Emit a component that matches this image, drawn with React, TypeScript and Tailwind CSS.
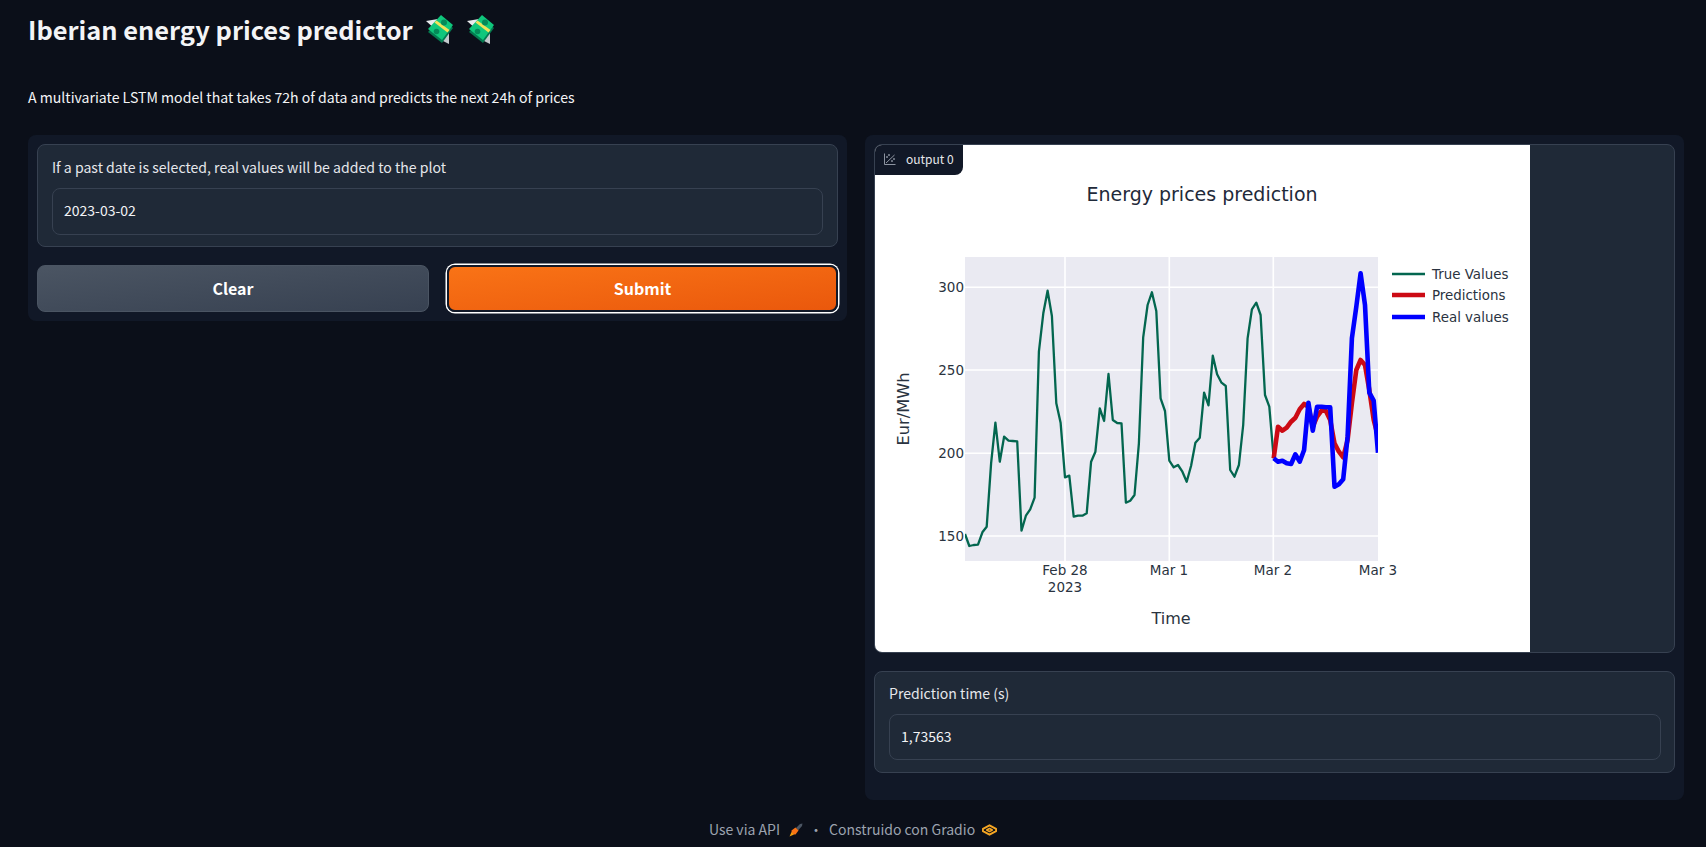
const green: number[] = [852,888,885,884,847,830,640,518,635,560,572,573,574,842,797,778,743,305,190,122,198,460,518,682,677,800,797,797,790,635,605,475,513,372,510,519,520,758,752,735,580,262,165,127,183,445,483,632,652,645,665,695,647,578,563,428,466,317,373,398,408,660,680,645,525,265,178,158,195,435,470,625];
const red: number[] = [625,530,542,533,515,503,478,462,470,530,500,482,482,510,580,605,622,570,460,360,330,345,420,510,560];
const blue: number[] = [625,635,632,640,642,613,635,600,458,542,470,470,472,472,710,703,688,560,265,170,70,165,428,452,608];

const X0 = 965;
const DX = (1378 - 965) / 95;
const line = (ys: number[], start: number) =>
  ys.map((y, i) => `${(X0 + (start + i) * DX).toFixed(1)},${(250 + y / 3).toFixed(1)}`).join(" ");

const FONT = "'DejaVu Sans', sans-serif";
const INK = "#2a3340";

function Chart() {
  return (
    <svg viewBox="875 145 655 507" className="block w-[655px] h-[507px]" style={{ fontFamily: FONT }}>
      <defs>
        <clipPath id="plotclip">
          <rect x="965" y="257" width="413" height="304" />
        </clipPath>
      </defs>
      <text x="1202" y="201" textAnchor="middle" fontSize="19" fill="#1f2a3a">Energy prices prediction</text>
      <rect x="965" y="257" width="413" height="304" fill="#eaeaf2" />
      {[287.3, 370, 453.3, 536].map((y) => (
        <line key={y} x1="965" x2="1378" y1={y} y2={y} stroke="#fff" strokeWidth="1.6" />
      ))}
      {[1065, 1169.3, 1273.3].map((x) => (
        <line key={x} x1={x} x2={x} y1="257" y2="561" stroke="#fff" strokeWidth="1.6" />
      ))}
      <g clipPath="url(#plotclip)">
        <polyline points={line(green, 0)} fill="none" stroke="#03664f" strokeWidth="2.3" strokeLinejoin="round" />
        <polyline points={line(red, 71)} fill="none" stroke="#cc0a14" strokeWidth="4.6" strokeLinejoin="round" />
        <polyline points={line(blue, 71)} fill="none" stroke="#0000ff" strokeWidth="4.6" strokeLinejoin="round" />
      </g>
      {[[300, 292], [250, 375], [200, 458], [150, 541]].map(([v, y]) => (
        <text key={v} x="964" y={y} textAnchor="end" fontSize="13.5" fill={INK}>{v}</text>
      ))}
      {[["Feb 28", 1065], ["Mar 1", 1169], ["Mar 2", 1273], ["Mar 3", 1378]].map(([t, x]) => (
        <text key={t} x={x} y="575" textAnchor="middle" fontSize="13.5" fill={INK}>{t}</text>
      ))}
      <text x="1065" y="592" textAnchor="middle" fontSize="13.5" fill={INK}>2023</text>
      <text x="1171" y="624" textAnchor="middle" fontSize="16" fill={INK}>Time</text>
      <text transform="translate(909 409) rotate(-90)" textAnchor="middle" fontSize="16.2" fill={INK}>Eur/MWh</text>
      <line x1="1392" x2="1425" y1="274" y2="274" stroke="#03664f" strokeWidth="2.3" />
      <line x1="1392" x2="1425" y1="295" y2="295" stroke="#cc0a14" strokeWidth="4.6" />
      <line x1="1392" x2="1425" y1="317" y2="317" stroke="#0000ff" strokeWidth="4.6" />
      <text x="1432" y="279" fontSize="13.4" fill={INK}>True Values</text>
      <text x="1432" y="300" fontSize="13.4" fill={INK}>Predictions</text>
      <text x="1432" y="322" fontSize="13.4" fill={INK}>Real values</text>
    </svg>
  );
}

function MoneyEmoji() {
  return (
    <svg viewBox="0 0 28 29" className="mt-[1px] h-[29px] w-[28px] shrink-0">
      <polygon points="0,6 12,4 9,14" fill="#e8eaed" />
      <polygon points="17,18 23,16 23,29 15,25" fill="#c3c9cd" />
      <polygon points="2,17 15,3 27,13 16,28" fill="#047a50" />
      <polygon points="2,14 15,0 27,10 16,25" fill="#0fc77c" />
      <polygon points="8.5,7.5 10.5,5.5 23.5,15 21.5,17.5" fill="#f0e25a" />
      <circle cx="18" cy="7.5" r="3" fill="#058a59" />
      <circle cx="10.5" cy="16.5" r="2.8" fill="#058a59" />
    </svg>
  );
}

function PlotIcon() {
  return (
    <svg viewBox="0 0 12 12" className="h-[12px] w-[12px]" fill="none" stroke="#9ca3af" strokeWidth="0.9">
      <path d="M0.5 0.5V11.5H11.5" />
      <path d="M2 10L10.5 2" />
      <circle cx="3" cy="4" r="0.5" fill="#9ca3af" />
      <circle cx="5" cy="2" r="0.5" fill="#9ca3af" />
      <circle cx="8" cy="8" r="0.5" fill="#9ca3af" />
      <circle cx="10" cy="6" r="0.5" fill="#9ca3af" />
    </svg>
  );
}

function Rocket() {
  return (
    <svg viewBox="0 0 14 14" className="h-[14px] w-[14px] shrink-0">
      <path d="M7 5L11 1L13.5 0.5L13 3L9 7.5Z" fill="#4b5563" />
      <path d="M2.5 7.5L6.5 4.5L9.5 7.5L6.5 11.5C4.5 12 2 10.5 2.5 7.5Z" fill="#f97316" />
      <path d="M2.5 9L0.5 13.5L5 11.5Z" fill="#f59e0b" />
    </svg>
  );
}

function GradioLogo() {
  return (
    <svg viewBox="0 0 16 12" className="h-[12px] w-[15px] shrink-0" fill="none" stroke="#f5a623" strokeWidth="2" strokeLinejoin="round">
      <path d="M8 1L15 4.8V7.2L8 11L1 7.2V4.8Z" />
      <path d="M5 6L8 4.4L11 6L8 7.6Z" strokeWidth="1.6" />
    </svg>
  );
}

export default function App() {
  return (
    <div className="min-h-[847px] bg-[#0b0f19] text-white" style={{ fontFamily: "'Noto Sans CJK SC', sans-serif" }}>
      <div className="pl-[28px] pr-[22px]">
        <div className="h-[88px] pt-[11px]">
          <h1 className="flex items-center text-[25.4px] leading-[36px] font-semibold text-[#f3f4f6]">
            <span>Iberian energy prices predictor</span>
            <span className="ml-[13px] flex gap-[13px]">
              <MoneyEmoji />
              <MoneyEmoji />
            </span>
          </h1>
        </div>
        <p className="h-[47px] text-[14.1px] leading-[18px] text-[#f3f4f6]">
          A multivariate LSTM model that takes 72h of data and predicts the next 24h of prices
        </p>

        <div className="flex items-start gap-[18px]">
          <div className="w-[819px] rounded-lg bg-[#111827] p-[9px]">
            <div className="rounded-lg border border-[#374151] bg-[#1f2937] px-[14px] pt-[13px] pb-[11px]">
              <div className="h-[20px] text-[14.08px] leading-[18px] text-[#e5e7eb]">
                If a past date is selected, real values will be added to the plot
              </div>
              <div className="mt-[10px] flex h-[47px] items-center rounded-lg border border-[#374151] bg-[#1f2937] pb-[2px] pl-[11px] text-[14px] text-[#f3f4f6]">
                2023-03-02
              </div>
            </div>
            <div className="mt-[18px] flex gap-[18px]">
              <button className="h-[47px] w-[392px] rounded-lg border border-[#4b5563] bg-gradient-to-br from-[#4b5563] to-[#374151] pb-[2px] text-[16px] font-semibold text-white">
                Clear
              </button>
              <button className="h-[47px] w-[391px] rounded-lg border-2 border-[#111827] bg-gradient-to-br from-[#f97316] to-[#ea580c] pb-[1px] text-[16px] font-semibold text-white ring-[1.5px] ring-white">
                Submit
              </button>
            </div>
          </div>

          <div className="w-[819px] rounded-lg bg-[#111827] px-[9px] pt-[9px] pb-[27px]">
            <div className="relative h-[509px] overflow-hidden rounded-lg border border-[#374151] bg-[#1f2937]">
              <div className="w-[655px] bg-white">
                <Chart />
              </div>
              <div className="absolute left-0 top-0 flex h-[30px] w-[88px] items-center gap-[10px] rounded-br-lg bg-[#111827] pb-[3px] pl-[9px] text-[12px] text-[#e5e7eb]">
                <PlotIcon />
                <span>output 0</span>
              </div>
            </div>
            <div className="mt-[18px] rounded-lg border border-[#374151] bg-[#1f2937] py-[12px] pl-[14px] pr-[13px]">
              <div className="h-[20px] text-[14.08px] leading-[18px] text-[#e5e7eb]">Prediction time (s)</div>
              <div className="mt-[10px] flex h-[46px] items-center rounded-lg border border-[#374151] bg-[#1f2937] pb-[2px] pl-[11px] text-[14px] text-[#f3f4f6]">
                1,73563
              </div>
            </div>
          </div>
        </div>
      </div>

      <footer className="mt-[20px] flex h-[20px] items-center justify-center text-[14px] text-[#9ca3af]">
        <span className="pb-[2px]">Use via API</span>
        <span className="ml-[9px]"><Rocket /></span>
        <span className="mx-[11px] flex w-[4px] justify-center pb-[2px]">·</span>
        <span className="pb-[2px]">Construido con Gradio</span>
        <span className="ml-[7px]"><GradioLogo /></span>
      </footer>
    </div>
  );
}
